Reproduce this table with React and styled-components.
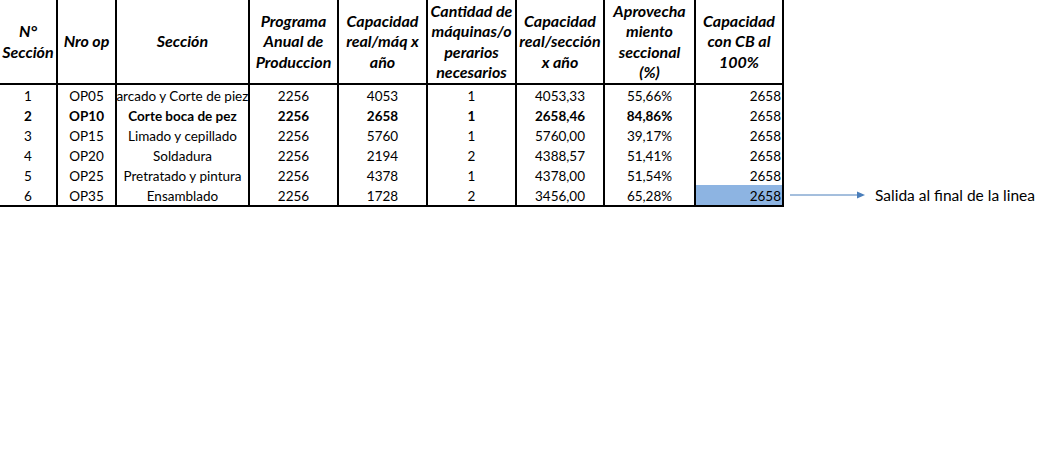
import React from "react";
import styled, { createGlobalStyle } from "styled-components";

const Global = createGlobalStyle`
  html, body { margin: 0; padding: 0; background: #ffffff; }
  body { font-family: Lato, "Open Sans", sans-serif; color: #000; }
`;

const Page = styled.div`
  display: flex;
  align-items: flex-start;
  width: 1051px;
  background: #fff;
`;

const Sheet = styled.div`
  display: grid;
  grid-template-columns: 58px 59px 133px 89px 89px 89px 88px 91px 88px;
  grid-auto-rows: 20px;
  grid-template-rows: 85px;
  border-bottom: 2px solid #000;
  font-size: 13.5px;
`;

const HeadCell = styled.div`
  box-sizing: border-box;
  border-right: 2px solid #000;
  border-bottom: 2px solid #000;
  display: flex;
  align-items: center;
  justify-content: center;
  text-align: center;
  font-weight: 700;
  font-style: italic;
  font-size: 16px;
  line-height: 20.5px;
  white-space: nowrap;
  overflow: hidden;
`;

const Cell = styled.div`
  box-sizing: border-box;
  border-right: 2px solid #000;
  display: flex;
  align-items: center;
  justify-content: ${(p) => (p.$right ? "flex-end" : "center")};
  padding-right: ${(p) => (p.$right ? "1px" : "0")};
  padding-top: 2px;
  font-weight: ${(p) => (p.$bold ? 700 : 400)};
  background: ${(p) => (p.$fill ? "#8db4e2" : "transparent")};
  white-space: nowrap;
  overflow: hidden;
  line-height: 18px;
`;

const Note = styled.div`
  align-self: flex-end;
  display: flex;
  align-items: center;
  height: 20px;
  margin-bottom: 2px;
  margin-left: 6px;
  font-size: 15.5px;
  gap: 9px;
  white-space: nowrap;
`;

const headers = [
  ["N°", "Sección"],
  ["Nro op"],
  ["Sección"],
  ["Programa", "Anual de", "Produccion"],
  ["Capacidad", "real/máq x", "año"],
  ["Cantidad de", "máquinas/o", "perarios", "necesarios"],
  ["Capacidad", "real/sección", "x año"],
  ["Aprovecha", "miento", "seccional", "(%)"],
  ["Capacidad", "con CB al", "100%"],
];

const rows = [
  ["1", "OP05", "Marcado y Corte de piezas", "2256", "4053", "1", "4053,33", "55,66%", "2658"],
  ["2", "OP10", "Corte boca de pez", "2256", "2658", "1", "2658,46", "84,86%", "2658"],
  ["3", "OP15", "Limado y cepillado", "2256", "5760", "1", "5760,00", "39,17%", "2658"],
  ["4", "OP20", "Soldadura", "2256", "2194", "2", "4388,57", "51,41%", "2658"],
  ["5", "OP25", "Pretratado y pintura", "2256", "4378", "1", "4378,00", "51,54%", "2658"],
  ["6", "OP35", "Ensamblado", "2256", "1728", "2", "3456,00", "65,28%", "2658"],
];

export default function App() {
  return (
    <>
      <Global />
      <Page>
        <Sheet>
          {headers.map((h, i) => (
            <HeadCell key={"h" + i}>
              <div>
                {h.map((l, j) => (
                  <div key={j}>{l}</div>
                ))}
              </div>
            </HeadCell>
          ))}
          {rows.map((r, ri) =>
            r.map((v, ci) => (
              <Cell
                key={ri + "-" + ci}
                $bold={ri === 1 && ci < 8}
                $right={ci === 8}
                $fill={ci === 8 && ri === 5}
              >
                {v}
              </Cell>
            ))
          )}
        </Sheet>
        <Note>
          <svg width="76" height="10" viewBox="0 0 76 10">
            <line x1="0" y1="5" x2="68" y2="5" stroke="#4a7ebb" strokeWidth="1" />
            <polygon points="67,1.5 75,5 67,8.5" fill="#4a7ebb" />
          </svg>
          <span>Salida al final de la linea</span>
        </Note>
      </Page>
    </>
  );
}
